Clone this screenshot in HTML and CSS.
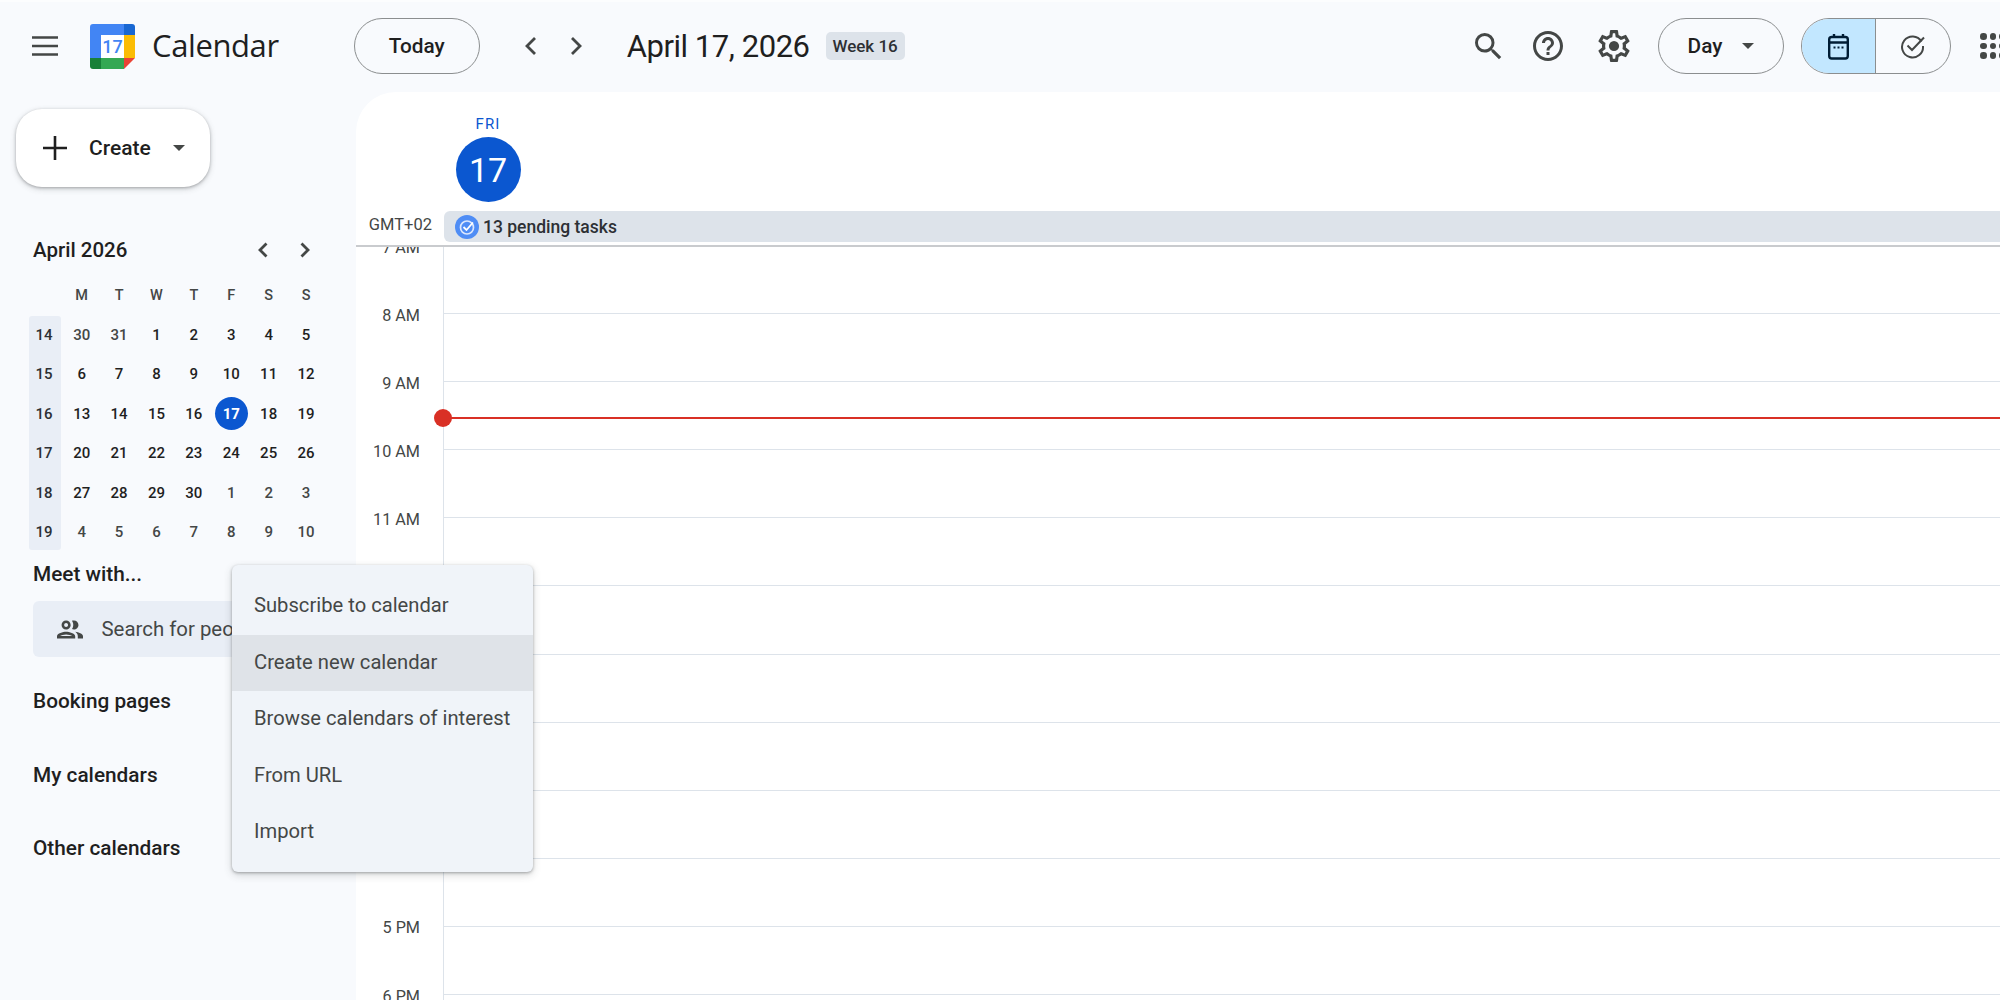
FILE: index.html
```html
<!DOCTYPE html>
<html lang="en">
<head>
<meta charset="utf-8">
<title>Calendar</title>
<link rel="stylesheet" href="styles.css">
</head>
<body>
<div class="app">
  <header class="topbar">
    <button class="icon-btn burger" aria-label="Menu"><svg viewBox="0 0 26 20" width="26" height="20"><path d="M0 1.500h26M0 10h26M0 18.500h26" class="stroke-dark"/></svg></button>
    <div class="logo">
      <svg viewBox="0 0 45 45" width="45" height="45">
        <path d="M3 0h31v11H11v23H0V3a3 3 0 0 1 3-3z" fill="#4285f4"/>
        <path d="M34 0h8a3 3 0 0 1 3 3v8H34z" fill="#1967d2"/>
        <rect x="34" y="11" width="11" height="23" fill="#fbbc04"/>
        <rect x="11" y="34" width="23" height="11" fill="#34a853"/>
        <path d="M0 34h11v11H3a3 3 0 0 1-3-3z" fill="#188038"/>
        <path d="M34 34h11L34 45z" fill="#ea4335"/>
        <rect x="11" y="11" width="23" height="23" fill="#fff"/>
        <text x="22.500" y="29" class="logo-num">17</text>
      </svg>
    </div>
    <span class="brand">Calendar</span>
    <button class="pill today">Today</button>
    <button class="icon-btn nav-prev" aria-label="Previous"><svg viewBox="0 0 12 20" width="12" height="20"><path d="M10 2l-8 8 8 8" class="stroke-mid"/></svg></button>
    <button class="icon-btn nav-next" aria-label="Next"><svg viewBox="0 0 12 20" width="12" height="20"><path d="M2 2l8 8-8 8" class="stroke-mid"/></svg></button>
    <h1 class="date">April 17, 2026</h1>
    <span class="week-chip">Week 16</span>
    <div class="spacer"></div>
    <button class="icon-btn tool tool-search" aria-label="Search"><svg viewBox="3 3 18 18" width="27" height="27"><path fill="#444746" d="M15.500 14h-.79l-.28-.27A6.471 6.471 0 0 0 16 9.500 6.500 6.500 0 1 0 9.500 16c1.610 0 3.090-.59 4.230-1.570l.27.28v.79l5 4.990L20.490 19l-4.990-5zm-6 0C7.010 14 5 11.990 5 9.500S7.010 5 9.500 5 14 7.010 14 9.500 11.990 14 9.500 14z"/></svg></button>
    <button class="icon-btn tool tool-help" aria-label="Help"><svg viewBox="2 2 20 20" width="30" height="30"><path fill="#444746" d="M11 18h2v-2h-2v2zm1-16C6.480 2 2 6.480 2 12s4.480 10 10 10 10-4.480 10-10S17.520 2 12 2zm0 18c-4.410 0-8-3.590-8-8s3.590-8 8-8 8 3.590 8 8-3.590 8-8 8zm0-14c-2.210 0-4 1.790-4 4h2c0-1.100.9-2 2-2s2 .9 2 2c0 2-3 1.750-3 5h2c0-2.250 3-2.500 3-5 0-2.210-1.790-4-4-4z"/></svg></button>
    <button class="icon-btn tool" aria-label="Settings"><svg viewBox="2 2 20 20" width="32" height="32"><path fill="#444746" d="M19.430 12.980c.04-.32.07-.64.07-.98 0-.34-.03-.66-.07-.98l2.110-1.650c.19-.15.24-.42.12-.64l-2-3.460a.5.5 0 0 0-.61-.22l-2.490 1c-.52-.4-1.080-.73-1.690-.98l-.38-2.650A.488.488 0 0 0 14 2h-4c-.25 0-.46.18-.49.42l-.38 2.650c-.61.25-1.170.59-1.690.98l-2.490-1a.566.566 0 0 0-.18-.03c-.17 0-.34.09-.43.25l-2 3.460c-.13.22-.07.49.12.64l2.110 1.650c-.04.32-.07.65-.07.98 0 .33.03.66.07.98l-2.110 1.650c-.19.15-.24.42-.12.64l2 3.460a.5.5 0 0 0 .61.22l2.490-1c.52.4 1.080.73 1.690.98l.38 2.650c.03.24.24.42.49.42h4c.25 0 .46-.18.49-.42l.38-2.650c.61-.25 1.170-.59 1.690-.98l2.490 1c.06.02.12.03.18.03.17 0 .34-.09.43-.25l2-3.460c.12-.22.07-.49-.12-.64l-2.110-1.650zm-1.980-1.710c.04.31.05.52.05.73 0 .21-.02.43-.05.73l-.14 1.130.89.7 1.080.84-.7 1.210-1.270-.51-1.040-.42-.9.68c-.43.32-.84.56-1.250.73l-1.060.43-.16 1.130-.2 1.350h-1.400l-.19-1.350-.16-1.130-1.060-.43c-.43-.18-.83-.41-1.230-.71l-.91-.7-1.060.43-1.270.51-.7-1.210 1.080-.84.89-.7-.14-1.130c-.03-.31-.05-.54-.05-.74s.02-.43.05-.73l.14-1.130-.89-.7-1.080-.84.7-1.210 1.270.51 1.040.42.9-.68c.43-.32.84-.56 1.250-.73l1.060-.43.16-1.130.2-1.350h1.390l.19 1.350.16 1.130 1.060.43c.43.18.83.41 1.230.71l.91.7 1.060-.43 1.270-.51.7 1.210-1.070.85-.89.7.14 1.130z"/><circle cx="12" cy="12" r="3.200" fill="#444746"/></svg></button>
    <button class="pill day">Day<svg class="caret" viewBox="0 0 12 6" width="12" height="6"><path d="M0 0h12L6 6z" fill="#444746"/></svg></button>
    <div class="toggle">
      <span class="toggle-cell is-on"><svg viewBox="0 0 21 27" width="21" height="27"><path d="M6 1v4M15 1v4" stroke="#001d35" stroke-width="2.400" fill="none"/><rect x="1.200" y="4" width="18.600" height="21.500" rx="2.500" stroke="#001d35" stroke-width="2.400" fill="none"/><path d="M1 9.500h19" stroke="#001d35" stroke-width="2.400"/><path d="M5.500 14.500h2M9.500 14.500h2M13.500 14.500h2" stroke="#001d35" stroke-width="2"/></svg></span>
      <span class="toggle-cell"><svg viewBox="0 0 26 26" width="26" height="26"><path d="M21.500 8.500A10.500 10.500 0 1 0 23 13" stroke="#444746" stroke-width="2" fill="none"/><path d="M7.500 12.500l4.500 4.500L24 4.500" stroke="#444746" stroke-width="2" fill="none"/></svg></span>
    </div>
    <div class="apps" aria-label="Apps"><i></i><i></i><i></i><i></i><i></i><i></i><i></i><i></i><i></i></div>
  </header>

  <div class="workspace">
    <aside class="sidebar">
      <button class="create">
        <svg viewBox="0 0 24 24" width="24" height="24"><path d="M12 0v24M0 12h24" stroke="#1f1f1f" stroke-width="2.600"/></svg>
        <span class="create-label">Create</span>
        <svg viewBox="0 0 12 6" width="12" height="6"><path d="M0 0h12L6 6z" fill="#444746"/></svg>
      </button>

      <div class="mini-head">
        <span class="mini-title">April 2026</span>
        <svg class="mini-prev" viewBox="0 0 10 16" width="10" height="16"><path d="M8.500 1.500L2 8l6.500 6.500" class="stroke-mid"/></svg>
        <svg class="mini-next" viewBox="0 0 10 16" width="10" height="16"><path d="M1.500 1.500L8 8l-6.500 6.500" class="stroke-mid"/></svg>
      </div>

      <div class="mini-wrap">
        <div class="week-band"></div>
        <div class="mini-grid">
          <span></span><span class="dow">M</span><span class="dow">T</span><span class="dow">W</span><span class="dow">T</span><span class="dow">F</span><span class="dow">S</span><span class="dow">S</span>
          <span class="wk">14</span><span class="muted">30</span><span class="muted">31</span><span>1</span><span>2</span><span>3</span><span>4</span><span>5</span>
          <span class="wk">15</span><span>6</span><span>7</span><span>8</span><span>9</span><span>10</span><span>11</span><span>12</span>
          <span class="wk">16</span><span>13</span><span>14</span><span>15</span><span>16</span><span class="now"><b>17</b></span><span>18</span><span>19</span>
          <span class="wk">17</span><span>20</span><span>21</span><span>22</span><span>23</span><span>24</span><span>25</span><span>26</span>
          <span class="wk">18</span><span>27</span><span>28</span><span>29</span><span>30</span><span class="muted">1</span><span class="muted">2</span><span class="muted">3</span>
          <span class="wk">19</span><span class="muted">4</span><span class="muted">5</span><span class="muted">6</span><span class="muted">7</span><span class="muted">8</span><span class="muted">9</span><span class="muted">10</span>
        </div>
      </div>

      <div class="side-title meet">Meet with...</div>
      <div class="people">
        <svg viewBox="2 5 20 14" width="26" height="19"><path fill="#444746" d="M9 13.750c-2.340 0-7 1.170-7 3.500V19h14v-1.750c0-2.330-4.660-3.500-7-3.500zM4.340 17c.84-.58 2.870-1.250 4.660-1.250s3.820.67 4.660 1.250H4.340zM9 12c1.930 0 3.500-1.570 3.500-3.500S10.930 5 9 5 5.500 6.570 5.500 8.500 7.070 12 9 12zm0-5c.83 0 1.500.67 1.500 1.500S9.830 10 9 10s-1.500-.67-1.500-1.500S8.170 7 9 7zm7.040 6.810c1.160.84 1.960 1.960 1.960 3.440V19h4v-1.750c0-2.020-3.500-3.170-5.960-3.440zM15 12c1.930 0 3.500-1.570 3.500-3.500S16.930 5 15 5c-.54 0-1.040.13-1.500.35.63.89 1 1.980 1 3.150s-.37 2.260-1 3.150c.46.22.96.35 1.500.35z"/></svg>
        <span class="people-text">Search for people</span>
      </div>
      <div class="side-title booking">Booking pages</div>
      <div class="side-title mine">My calendars</div>
      <div class="side-title other">Other calendars</div>
    </aside>

    <main class="panel">
      <div class="day-head">
        <span class="dow-big">FRI</span>
        <span class="day-circle">17</span>
      </div>
      <div class="allday">
        <span class="tz">GMT+02</span>
        <div class="tasks">
          <svg viewBox="0 0 24 24" width="24" height="24"><circle cx="12" cy="12" r="12" fill="#4f8df5"/><circle cx="12" cy="12.500" r="6.500" fill="none" stroke="#dbe7fd" stroke-width="1.700"/><path d="M8.500 12l3 3 6.500-7.500" fill="none" stroke="#fff" stroke-width="1.800"/></svg>
          <span>13 pending tasks</span>
        </div>
      </div>
      <div class="hours">
        <div class="hour"><span class="hlabel">7 AM</span><span class="hcell"></span></div>
        <div class="hour"><span class="hlabel">8 AM</span><span class="hcell"></span></div>
        <div class="hour"><span class="hlabel">9 AM</span><span class="hcell"></span></div>
        <div class="hour"><span class="hlabel">10 AM</span><span class="hcell"></span></div>
        <div class="hour"><span class="hlabel">11 AM</span><span class="hcell"></span></div>
        <div class="hour"><span class="hlabel">12 PM</span><span class="hcell"></span></div>
        <div class="hour"><span class="hlabel">1 PM</span><span class="hcell"></span></div>
        <div class="hour"><span class="hlabel">2 PM</span><span class="hcell"></span></div>
        <div class="hour"><span class="hlabel">3 PM</span><span class="hcell"></span></div>
        <div class="hour"><span class="hlabel">4 PM</span><span class="hcell"></span></div>
        <div class="hour"><span class="hlabel">5 PM</span><span class="hcell"></span></div>
        <div class="hour"><span class="hlabel">6 PM</span><span class="hcell"></span></div>
        <div class="now-line"><i></i></div>
      </div>
    </main>
  </div>

  <ul class="menu">
    <li>Subscribe to calendar</li>
    <li class="hover">Create new calendar</li>
    <li>Browse calendars of interest</li>
    <li>From URL</li>
    <li>Import</li>
  </ul>
</div>
</body>
</html>
```

FILE: styles.css
```css
* { box-sizing: border-box; }
html, body { margin: 0; height: 100%; overflow: hidden; }
body { background: #f8fafd; color: #1f1f1f; font-family: Roboto, "Liberation Sans", sans-serif; }
button { font: inherit; color: inherit; background: none; border: 0; padding: 0; margin: 0; }
.app { position: relative; width: 2000px; height: 1000px; display: flex; flex-direction: column; overflow: hidden; }
.stroke-dark { stroke: #444746; stroke-width: 2.600; fill: none; }
.stroke-mid { stroke: #444746; stroke-width: 2.800; fill: none; }

/* top bar */
.topbar { flex: none; height: 92px; display: flex; align-items: center; border-top: 2px solid #fcfdfe; padding-left: 32px; }
.topbar > * { flex: none; }
.icon-btn { display: flex; align-items: center; justify-content: center; }
.burger { width: 26px; margin-bottom: 2px; }
.logo { display: flex; margin: 0 0 2px 32px; }
.logo-num { font-family: Roboto, sans-serif; font-size: 18px; font-weight: 500; fill: #4285f4; text-anchor: middle; }
.brand { margin: 0 0 5px 17px; font-family: "Open Sans", Roboto, sans-serif; font-size: 31px; letter-spacing: -.4px; color: #1f1f1f; }
.pill { height: 56px; border: 1.500px solid #8b8e8f; border-radius: 28px; font-size: 20.800px; font-weight: 500; background: #f8fafd; margin-bottom: 2px; }
.today { width: 126px; margin-left: 75px; }
.nav-prev { width: 12px; margin: 0 0 2px 45.500px; }
.nav-next { width: 12px; margin: 0 0 2px 33px; }
.date { margin: 0 0 2px 44.500px; font-family: Roboto, sans-serif; font-size: 31px; letter-spacing: -.45px; font-weight: 400; color: #1f1f1f; }
.week-chip { margin: 0 0 2px 16px; height: 28px; width: 79px; border-radius: 5px; background: #dde3ea; font-size: 17px; font-weight: 500; display: flex; align-items: center; justify-content: center; color: #2d3034; }
.spacer { flex: 1; }
.tool { width: 32px; margin: 0 30px 2px 0; }
.tool-search { margin-right: 28px; }
.tool-help { margin-right: 34px; }
.day { width: 126px; margin-left: -2px; display: flex; align-items: center; justify-content: center; gap: 20px; color: #1f1f1f; }
.toggle { display: flex; width: 150px; height: 56px; margin: 0 0 2px 17px; border: 1.500px solid #8b8e8f; border-radius: 28px; overflow: hidden; }
.toggle-cell { flex: 1; display: flex; align-items: center; justify-content: center; }
.toggle-cell.is-on { flex: none; width: 74px; background: #c2e7ff; border-right: 1.500px solid #8b8e8f; }
.apps { margin: 0 -4px 2px 29px; width: 24px; display: grid; grid-template-columns: repeat(3, 6.500px); gap: 3px; }
.apps i { width: 6.500px; height: 6.500px; border-radius: 50%; background: #444746; }

.workspace { flex: 1; display: flex; min-height: 0; }

/* sidebar */
.sidebar { flex: none; width: 356px; padding: 17px 0 0 16px; display: flex; flex-direction: column; align-items: flex-start; }
.create { width: 194px; height: 78px; border-radius: 26px; background: #fff; box-shadow: 0 1px 3px rgba(60,64,67,.35), 0 2px 6px rgba(60,64,67,.2); display: flex; align-items: center; padding-left: 27px; }
.create-label { margin: 0 22px 0 22px; font-size: 21px; font-weight: 500; color: #1f1f1f; }
.mini-head { display: flex; align-items: center; width: 300px; margin-top: 49px; padding-left: 17px; height: 28px; }
.mini-title { font-size: 20.500px; font-weight: 500; flex: 1; color: #1f1f1f; }
.mini-prev { margin-right: 32px; }
.mini-next { margin-right: 6px; }
.mini-wrap { position: relative; margin: 11.500px 0 0 13px; }
.week-band { position: absolute; left: 0; top: 40.500px; width: 32px; height: 234px; border-radius: 3px; background: #e9eef6; }
.mini-grid { position: relative; display: grid; grid-template-columns: 34px repeat(7, 37.400px); grid-auto-rows: 39.500px; justify-items: center; align-items: center; font-size: 15px; font-weight: 500; color: #1f1f1f; }
.mini-grid > span { display: flex; align-items: center; justify-content: center; }
.mini-grid .dow { color: #444746; font-size: 14.500px; font-weight: 500; }
.mini-grid .wk { font-size: 15px; color: #2d3034; justify-self: start; width: 30px; }
.mini-grid .muted { color: #444746; }
.now b { width: 33px; height: 33px; border-radius: 50%; background: #0b57d0; color: #fff; display: flex; align-items: center; justify-content: center; font-weight: 700; }
.side-title { font-size: 20.800px; font-weight: 500; padding-left: 17px; color: #1f1f1f; }
.meet { margin-top: 10px; line-height: 24px; }
.people { width: 300px; height: 56px; margin: 15px 0 0 17px; border-radius: 6px; background: #e9eef6; display: flex; align-items: center; padding-left: 24px; }
.people-text { margin-left: 18.500px; font-size: 20.400px; color: #444746; }
.booking { margin-top: 32px; line-height: 24px; }
.mine { margin-top: 50px; line-height: 24px; }
.other { margin-top: 49px; line-height: 24px; }

/* main panel */
.panel { flex: 1; min-width: 0; background: #fff; border-radius: 40px 0 0 0; display: flex; flex-direction: column; overflow: hidden; }
.day-head { flex: none; height: 119px; width: 264px; display: flex; flex-direction: column; align-items: center; padding-top: 22px; }
.dow-big { font-size: 15px; font-weight: 400; color: #0b57d0; letter-spacing: 1.200px; line-height: 20px; }
.day-circle { width: 65px; height: 65px; margin-top: 3px; border-radius: 50%; background: #0b57d0; color: #fff; font-size: 34px; display: flex; align-items: center; justify-content: center; }
.allday { flex: none; height: 34px; display: flex; }
.tz { width: 87px; text-align: right; padding-right: 11px; font-size: 16.500px; line-height: 28px; color: #444746; }
.tasks { flex: 1; height: 31px; margin-left: 1px; background: #dde3ea; border-radius: 6px 0 0 6px; display: flex; align-items: center; padding-left: 11px; gap: 4px; font-size: 17.500px; font-weight: 500; color: #2d3034; }
.hours { flex: 1; min-height: 0; position: relative; border-top: 2px solid #c9cbce; overflow: hidden; }
.hour { height: 68.100px; display: flex; }
.hour:first-child { margin-top: -2px; }
.hlabel { width: 87px; padding-right: 23px; text-align: right; margin-top: -8.500px; font-size: 16.200px; line-height: 22px; height: 22px; color: #444746; white-space: nowrap; }
.hcell { flex: 1; border-top: 1.500px solid #dde3ea; border-left: 1.500px solid #dde3ea; }
.hour:first-child .hcell { border-top: 0; }
.now-line { position: absolute; left: 87px; right: 0; top: 170px; height: 2px; background: #d93025; }
.now-line i { position: absolute; left: -9px; top: -8px; width: 18px; height: 18px; border-radius: 50%; background: #d93025; }

/* menu */
.menu { position: absolute; left: 232px; top: 565px; width: 301px; height: 307px; margin: 0; padding: 13px 0; list-style: none; border-radius: 6px; background: #f0f4f9; box-shadow: 0 1px 3px rgba(60,64,67,.4), 0 3px 8px rgba(60,64,67,.2); font-size: 20.200px; color: #444746; }
.menu li { height: 56.500px; display: flex; align-items: center; padding: 0 0 2px 22px; white-space: nowrap; }
.menu .hover { background: #dfe3e8; }
```
